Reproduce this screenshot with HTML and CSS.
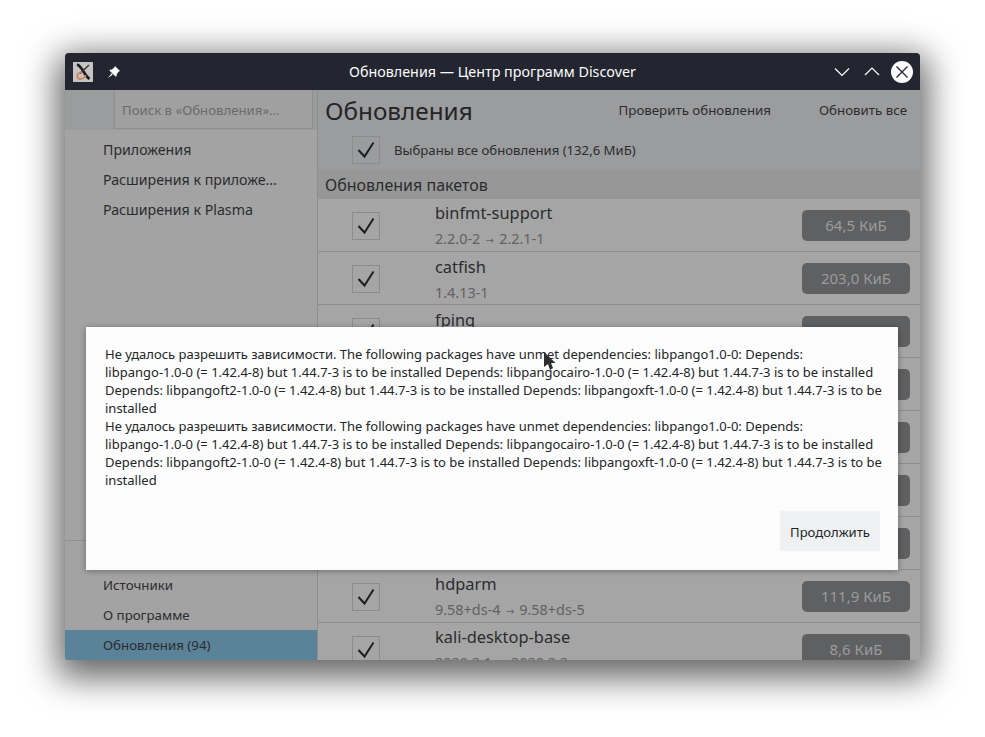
FILE: index.html
```html
<!DOCTYPE html>
<html lang="ru">
<head>
    <meta charset="UTF-8">
    <title>Обновления — Центр программ Discover</title>
    <link rel="stylesheet" href="styles.css">
</head>
<body>
    <div class="window">
        <div class="titlebar">
            <div class="title-left">
                <svg class="app-icon" viewBox="0 0 20 20">
                    <rect width="20" height="20" fill="#c4c4c4"/>
                    <path d="M4 2.5 C9 4 11 13 16.5 17" fill="none" stroke="#1d1d1d" stroke-width="2.6"/>
                    <path d="M16 3 L7 11.5" fill="none" stroke="#333" stroke-width="1.4"/>
                    <path d="M9 10 C3 11 3 17 7 17 C10 17 12 15 13 13" fill="none" stroke="#d9784a" stroke-width="1.5"/>
                </svg>
                <svg class="pin-icon" viewBox="0 0 14 14">
                    <path d="M8 1 L13 6 L11.5 6.8 L9.5 9.8 L9.8 11 L8.8 11.8 L2.4 5.4 L3.2 4.4 L4.4 4.7 L7.4 2.6 Z M4.6 8.2 L1 13 L5.8 9.4 Z" fill="#fff"/>
                </svg>
            </div>
            <div class="title-text">Обновления — Центр программ Discover</div>
            <div class="title-right">
                <svg class="win-btn" viewBox="0 0 16 16"><path d="M1 4.5 L8 11.5 L15 4.5" fill="none" stroke="#fff" stroke-width="1.2"/></svg>
                <svg class="win-btn" viewBox="0 0 16 16"><path d="M1 11 L8 4 L15 11" fill="none" stroke="#fff" stroke-width="1.2"/></svg>
                <svg class="win-close" viewBox="0 0 22 22">
                    <circle cx="11" cy="11" r="11" fill="#fcfcfc"/>
                    <path d="M5.5 5.5 L16.5 16.5 M16.5 5.5 L5.5 16.5" stroke="#232530" stroke-width="1.3"/>
                </svg>
            </div>
        </div>
        <div class="content">
            <aside class="sidebar">
                <div class="search-bar">
                    <div class="search-input">Поиск в «Обновления»...</div>
                </div>
                <nav class="nav-top">
                    <div class="nav-item">Приложения</div>
                    <div class="nav-item">Расширения к приложе...</div>
                    <div class="nav-item">Расширения к Plasma</div>
                </nav>
                <nav class="nav-bottom">
                    <div class="nav-item">Источники</div>
                    <div class="nav-item">О программе</div>
                    <div class="nav-item selected">Обновления (94)</div>
                </nav>
            </aside>
            <main class="main">
                <div class="page-head">
                    <h1>Обновления</h1>
                    <div class="actions">
                        <span>Проверить обновления</span>
                        <span>Обновить все</span>
                    </div>
                </div>
                <div class="select-all">
                    <span class="check"><svg viewBox="0 0 26 26"><path d="M5.5 13 L11.5 19.5 L20.5 5.5"/></svg></span>
                    <span>Выбраны все обновления (132,6 МиБ)</span>
                </div>
                <div class="section-head">Обновления пакетов</div>
                <div class="rows">
                    <div class="row">
                        <span class="check"><svg viewBox="0 0 26 26"><path d="M5.5 13 L11.5 19.5 L20.5 5.5"/></svg></span>
                        <div class="pkg"><div class="pkg-name">binfmt-support</div><div class="pkg-ver">2.2.0-2 <span class="arrow">→</span> 2.2.1-1</div></div>
                        <span class="size">64,5 КиБ</span>
                    </div>
                    <div class="row">
                        <span class="check"><svg viewBox="0 0 26 26"><path d="M5.5 13 L11.5 19.5 L20.5 5.5"/></svg></span>
                        <div class="pkg"><div class="pkg-name">catfish</div><div class="pkg-ver">1.4.13-1</div></div>
                        <span class="size">203,0 КиБ</span>
                    </div>
                    <div class="row">
                        <span class="check"><svg viewBox="0 0 26 26"><path d="M5.5 13 L11.5 19.5 L20.5 5.5"/></svg></span>
                        <div class="pkg"><div class="pkg-name">fping</div><div class="pkg-ver">4.2-1</div></div>
                        <span class="size">32,0 КиБ</span>
                    </div>
                    <div class="row">
                        <span class="check"><svg viewBox="0 0 26 26"><path d="M5.5 13 L11.5 19.5 L20.5 5.5"/></svg></span>
                        <div class="pkg"><div class="pkg-name">&nbsp;</div><div class="pkg-ver">&nbsp;</div></div>
                        <span class="size">&nbsp;</span>
                    </div>
                    <div class="row">
                        <span class="check"><svg viewBox="0 0 26 26"><path d="M5.5 13 L11.5 19.5 L20.5 5.5"/></svg></span>
                        <div class="pkg"><div class="pkg-name">&nbsp;</div><div class="pkg-ver">&nbsp;</div></div>
                        <span class="size">&nbsp;</span>
                    </div>
                    <div class="row">
                        <span class="check"><svg viewBox="0 0 26 26"><path d="M5.5 13 L11.5 19.5 L20.5 5.5"/></svg></span>
                        <div class="pkg"><div class="pkg-name">&nbsp;</div><div class="pkg-ver">&nbsp;</div></div>
                        <span class="size">&nbsp;</span>
                    </div>
                    <div class="row">
                        <span class="check"><svg viewBox="0 0 26 26"><path d="M5.5 13 L11.5 19.5 L20.5 5.5"/></svg></span>
                        <div class="pkg"><div class="pkg-name">&nbsp;</div><div class="pkg-ver">&nbsp;</div></div>
                        <span class="size">&nbsp;</span>
                    </div>
                    <div class="row">
                        <span class="check"><svg viewBox="0 0 26 26"><path d="M5.5 13 L11.5 19.5 L20.5 5.5"/></svg></span>
                        <div class="pkg"><div class="pkg-name">hdparm</div><div class="pkg-ver">9.58+ds-4 <span class="arrow">→</span> 9.58+ds-5</div></div>
                        <span class="size">111,9 КиБ</span>
                    </div>
                    <div class="row">
                        <span class="check"><svg viewBox="0 0 26 26"><path d="M5.5 13 L11.5 19.5 L20.5 5.5"/></svg></span>
                        <div class="pkg"><div class="pkg-name">kali-desktop-base</div><div class="pkg-ver">2020.2.1 <span class="arrow">→</span> 2020.2.2</div></div>
                        <span class="size">8,6 КиБ</span>
                    </div>
                </div>
            </main>
        </div>
        <div class="dialog">
            <p>Не удалось разрешить зависимости. The following packages have unmet dependencies: libpango1.0-0: Depends:<br>
            libpango-1.0-0 (= 1.42.4-8) but 1.44.7-3 is to be installed Depends: libpangocairo-1.0-0 (= 1.42.4-8) but 1.44.7-3 is to be installed<br>
            Depends: libpangoft2-1.0-0 (= 1.42.4-8) but 1.44.7-3 is to be installed Depends: libpangoxft-1.0-0 (= 1.42.4-8) but 1.44.7-3 is to be<br>
            installed</p>
            <p>Не удалось разрешить зависимости. The following packages have unmet dependencies: libpango1.0-0: Depends:<br>
            libpango-1.0-0 (= 1.42.4-8) but 1.44.7-3 is to be installed Depends: libpangocairo-1.0-0 (= 1.42.4-8) but 1.44.7-3 is to be installed<br>
            Depends: libpangoft2-1.0-0 (= 1.42.4-8) but 1.44.7-3 is to be installed Depends: libpangoxft-1.0-0 (= 1.42.4-8) but 1.44.7-3 is to be<br>
            installed</p>
            <div class="dialog-foot"><button class="btn">Продолжить</button></div>
        </div>
    </div>
    <svg class="cursor" viewBox="0 0 12 18"><path d="M0 0 L0 15 L4 12 L6 18 L9 16 L7 11 L11.5 11 Z" fill="#2d2d2d"/></svg>
</body>
</html>
```

FILE: styles.css
```css
* {
    margin: 0;
    padding: 0;
    box-sizing: border-box;
}

html, body {
    height: 100%;
    overflow: hidden;
}

body {
    background: #fff;
    padding: 53px 0 0 65px;
    font-family: 'Noto Sans', sans-serif;
    font-size: 13.3px;
    color: #2b2c2e;
    position: relative;
}

.window {
    position: relative;
    width: 855px;
    height: 607px;
    border-radius: 4px 4px 3px 3px;
    background: #a5a5a5;
    box-shadow: 0 10px 34px 8px rgba(0,0,0,0.6);
    display: flex;
    flex-direction: column;
}

.titlebar {
    height: 37px;
    flex-shrink: 0;
    background: #232530;
    border-radius: 4px 4px 0 0;
    display: flex;
    align-items: center;
    justify-content: space-between;
    padding: 0 7px 0 8px;
    position: relative;
    color: #fcfcfc;
    font-size: 14.3px;
}

.title-left, .title-right {
    display: flex;
    align-items: center;
}

.title-right {
    gap: 14px;
}

.title-text {
    position: absolute;
    left: 0;
    right: 0;
    text-align: center;
    pointer-events: none;
}

.app-icon {
    width: 20px;
    height: 20px;
}

.pin-icon {
    width: 14px;
    height: 14px;
    margin-left: 14px;
}

.win-btn {
    width: 16px;
    height: 16px;
}

.win-close {
    width: 22px;
    height: 22px;
    margin-left: -3px;
}

.content {
    flex: 1;
    display: flex;
    min-height: 0;
    overflow: hidden;
    border-radius: 0 0 3px 3px;
}

/* sidebar */
.sidebar {
    width: 253px;
    flex-shrink: 0;
    background: #a3a3a3;
    border-right: 1px solid #8e8e8e;
    display: flex;
    flex-direction: column;
}

.search-bar {
    height: 40px;
    background: #9b9c9d;
    padding: 0 4px 0 49px;
}

.search-input {
    height: 39px;
    border: 1px solid #8f8f8f;
    border-top: none;
    background: #a0a0a0;
    color: #6b6b6b;
    font-size: 13.2px;
    line-height: 41px;
    padding-left: 7px;
}

.nav-top {
    flex: 1;
    padding-top: 4px;
    font-size: 14.2px;
}

.nav-bottom {
    border-top: 1px solid #8e8e8e;
    padding-top: 29px;
}

.nav-item {
    height: 30px;
    line-height: 31px;
    padding-left: 38px;
}

.nav-item.selected {
    background: #5a8399;
}

/* main column */
.main {
    flex: 1;
    min-width: 0;
    background: #a5a5a5;
    display: flex;
    flex-direction: column;
}

.page-head {
    height: 40px;
    flex-shrink: 0;
    background: #9b9c9d;
    display: flex;
    align-items: center;
    justify-content: space-between;
    padding: 0 13px 0 7px;
}

.page-head h1 {
    font-size: 24.3px;
    font-weight: 400;
    color: #232427;
}

.actions {
    display: flex;
    gap: 48px;
}

.select-all {
    height: 40px;
    flex-shrink: 0;
    background: #9b9c9d;
    display: flex;
    align-items: center;
    padding-left: 34px;
    gap: 14px;
    font-size: 13.15px;
}

.section-head {
    height: 29px;
    flex-shrink: 0;
    background: #979797;
    font-size: 16px;
    line-height: 30px;
    padding-left: 7px;
}

.rows {
    flex: 1;
}

.row {
    height: 53px;
    display: flex;
    align-items: center;
    padding: 0 10px 0 34px;
    border-bottom: 1px solid #8e8e8e;
}

.check {
    width: 28px;
    height: 28px;
    flex-shrink: 0;
    border: 1px solid #8c8c8c;
    display: block;
}

.row .check {
    margin-top: 2px;
}

.check svg {
    display: block;
    width: 26px;
    height: 26px;
}

.check path {
    fill: none;
    stroke: #1e1f22;
    stroke-width: 2;
}

.pkg {
    flex: 1;
    margin-left: 55px;
    margin-top: 3px;
}

.pkg-name {
    font-size: 16.4px;
    line-height: 24px;
}

.pkg-ver {
    font-size: 14.4px;
    line-height: 24px;
    margin-top: 2px;
    color: #616161;
}

.arrow {
    font-family: 'DejaVu Sans', sans-serif;
    font-size: 10px;
    margin: 0 1.5px;
}

.size {
    width: 108px;
    height: 31px;
    border-radius: 5px;
    background: #5f6062;
    color: #9b9b9b;
    font-size: 15px;
    line-height: 31px;
    text-align: center;
}

/* error dialog */
.dialog {
    position: absolute;
    left: 21px;
    top: 274px;
    width: 812px;
    height: 243px;
    background: #fcfcfc;
    box-shadow: 0 1px 6px rgba(0,0,0,0.35);
    padding: 18px 18px 0 19px;
    display: flex;
    flex-direction: column;
    color: #232629;
    font-size: 13px;
    line-height: 18px;
    white-space: nowrap;
}

.dialog-foot {
    margin-top: auto;
    margin-bottom: 19px;
    display: flex;
    justify-content: flex-end;
}

.btn {
    width: 100px;
    height: 40px;
    border: none;
    background: #eff0f1;
    color: #232629;
    font-family: 'Noto Sans', sans-serif;
    font-size: 13.1px;
    padding-top: 2px;
}

.cursor {
    position: absolute;
    left: 544px;
    top: 352px;
    width: 12px;
    height: 18px;
}
```
